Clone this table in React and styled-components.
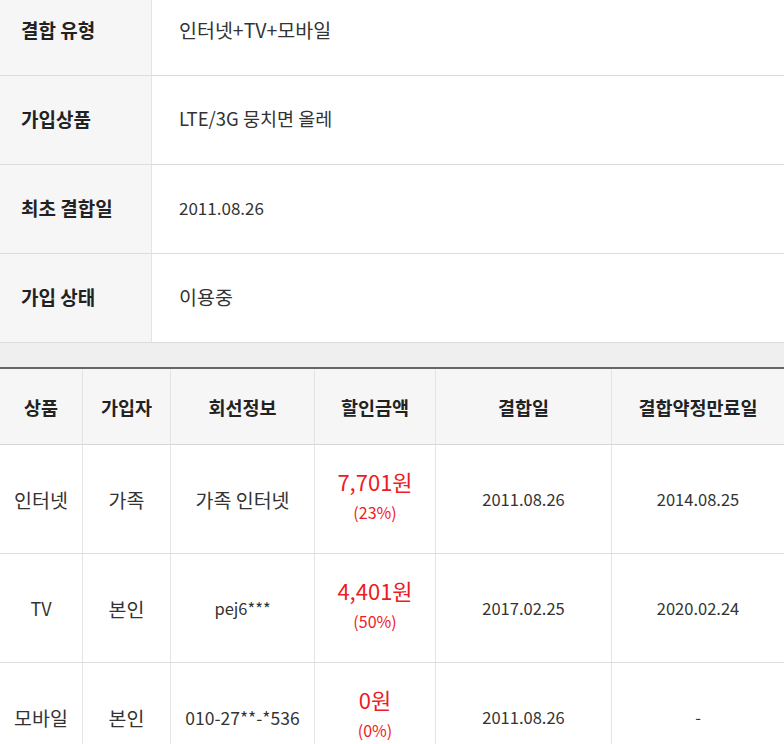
import React from "react";
import styled, { createGlobalStyle } from "styled-components";

const GlobalStyle = createGlobalStyle`
  html, body {
    margin: 0;
    padding: 0;
    background: #fff;
  }
  body {
    font-family: "Noto Sans CJK KR", "Noto Sans", sans-serif;
    color: #333;
    overflow: hidden;
  }
`;

const Page = styled.div`
  width: 784px;
  height: 744px;
  overflow: hidden;
`;

const InfoTable = styled.div`
  display: grid;
  grid-template-columns: 152px 1fr;
`;

const InfoLabel = styled.div`
  display: flex;
  align-items: center;
  height: 84px;
  padding-left: 21px;
  padding-bottom: 4px;
  background: #f6f6f6;
  border-right: 1px solid #e4e4e4;
  border-bottom: 1px solid #dcdcdc;
  font-size: 19px;
  font-weight: 700;
  color: #222;

  &.first {
    height: 58px;
    padding-bottom: 17px;
  }
`;

const InfoValue = styled.div`
  display: flex;
  align-items: center;
  height: 84px;
  padding-left: 27px;
  padding-bottom: 4px;
  border-bottom: 1px solid #dcdcdc;
  font-size: ${(p) => p.$size || 19}px;
  color: #333;

  &.first {
    height: 58px;
    padding-bottom: 17px;
  }
`;

const Gap = styled.div`
  height: 24px;
  background: #efefef;
  border-bottom: 2px solid #666;
`;

const ProductTable = styled.div`
  display: grid;
  grid-template-columns: 83px 88px 144px 121px 176px 1fr;
`;

const HeadCell = styled.div`
  display: flex;
  align-items: center;
  justify-content: center;
  height: 75px;
  background: #f6f6f6;
  border-right: ${(p) => (p.$last ? "none" : "1px solid #e4e4e4")};
  border-bottom: 1px solid #d6d6d6;
  font-size: 18.5px;
  font-weight: 700;
  color: #222;
`;

const Cell = styled.div`
  display: flex;
  flex-direction: column;
  align-items: center;
  justify-content: center;
  height: ${(p) => 108 - (p.$lift || 0)}px;
  padding-bottom: ${(p) => p.$lift || 0}px;
  border-right: ${(p) => (p.$last ? "none" : "1px solid #e4e4e4")};
  border-bottom: 1px solid #dcdcdc;
  font-size: ${(p) => p.$size || 19.5}px;
  color: #333;
`;

const Amount = styled.span`
  font-size: 22px;
  line-height: 30px;
  margin-bottom: 5px;
  color: #ec1c24;
`;

const Rate = styled.span`
  font-size: 16px;
  line-height: 22px;
  color: #ec1c24;
`;

const info = [
  { label: "결합 유형", value: "인터넷+TV+모바일", size: 19.5, first: true },
  { label: "가입상품", value: "LTE/3G 뭉치면 올레", size: 18.5 },
  { label: "최초 결합일", value: "2011.08.26", size: 17 },
  { label: "가입 상태", value: "이용중", size: 19.5 },
];

const heads = ["상품", "가입자", "회선정보", "할인금액", "결합일", "결합약정만료일"];

const rows = [
  { product: "인터넷", who: "가족", line: "가족 인터넷", lineSize: 19.5, amount: "7,701원", rate: "(23%)", joined: "2011.08.26", end: "2014.08.25" },
  { product: "TV", who: "본인", line: "pej6***", lineSize: 16.5, amount: "4,401원", rate: "(50%)", joined: "2017.02.25", end: "2020.02.24" },
  { product: "모바일", who: "본인", line: "010-27**-*536", lineSize: 17.5, amount: "0원", rate: "(0%)", joined: "2011.08.26", end: "-" },
];

function App() {
  return (
    <Page>
      <GlobalStyle />
      <InfoTable>
        {info.map((it) => (
          <React.Fragment key={it.label}>
            <InfoLabel className={it.first ? "first" : ""}>{it.label}</InfoLabel>
            <InfoValue className={it.first ? "first" : ""} $size={it.size}>
              {it.value}
            </InfoValue>
          </React.Fragment>
        ))}
      </InfoTable>
      <Gap />
      <ProductTable>
        {heads.map((h, i) => (
          <HeadCell key={h} $last={i === heads.length - 1}>
            {h}
          </HeadCell>
        ))}
        {rows.map((r) => (
          <React.Fragment key={r.product}>
            <Cell $size={r.product === "TV" ? 18 : 19.5}>{r.product}</Cell>
            <Cell>{r.who}</Cell>
            <Cell $size={r.lineSize}>{r.line}</Cell>
            <Cell $lift={10}>
              <Amount>{r.amount}</Amount>
              <Rate>{r.rate}</Rate>
            </Cell>
            <Cell $size={16.5}>{r.joined}</Cell>
            <Cell $size={16.5} $last>
              {r.end}
            </Cell>
          </React.Fragment>
        ))}
      </ProductTable>
    </Page>
  );
}

export default App;
